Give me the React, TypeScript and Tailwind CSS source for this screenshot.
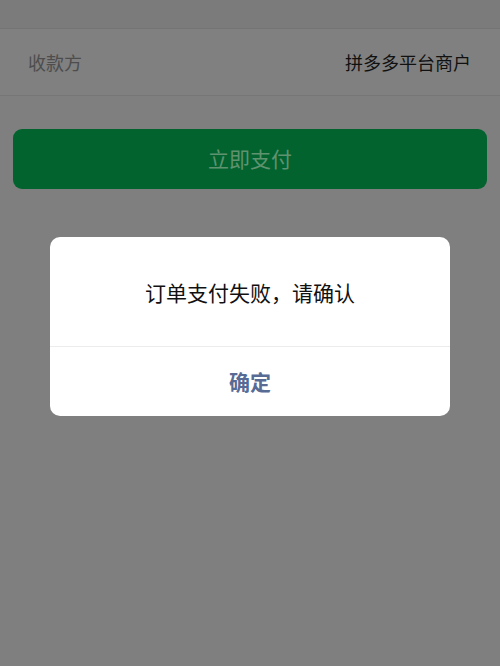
export default function App() {
  return (
    <div
      className="w-[500px] h-[666px] bg-[#7f7f7f] flex flex-col overflow-hidden"
      style={{ fontFamily: '"Noto Sans CJK SC", "Noto Sans", sans-serif' }}
    >
      <div className="h-[29px] bg-[#7b7b7b] border-b border-[#747474]" />
      <div className="h-[67px] bg-[#808080] border-b border-[#767676] flex items-center justify-between pl-[28px] pr-[29px]">
        <span className="text-[18px] text-[#4d4d4d]">收款方</span>
        <span className="text-[18px] text-[#111111]">拼多多平台商户</span>
      </div>
      <div className="px-[13px] mt-[33px]">
        <div className="h-[60px] rounded-[9px] bg-[#03632f] flex items-center justify-center">
          <span className="text-[21px] text-[#5f9370]">立即支付</span>
        </div>
      </div>
      <div className="mx-[50px] mt-[48px] bg-white rounded-[10px] flex flex-col">
        <div className="h-[110px] pt-[3px] flex items-center justify-center border-b border-[#ececec]">
          <span className="text-[21px] text-[#111111]">订单支付失败，请确认</span>
        </div>
        <div className="h-[69px] flex items-center justify-center">
          <span className="text-[21px] font-bold text-[#576b95]">确定</span>
        </div>
      </div>
    </div>
  );
}
